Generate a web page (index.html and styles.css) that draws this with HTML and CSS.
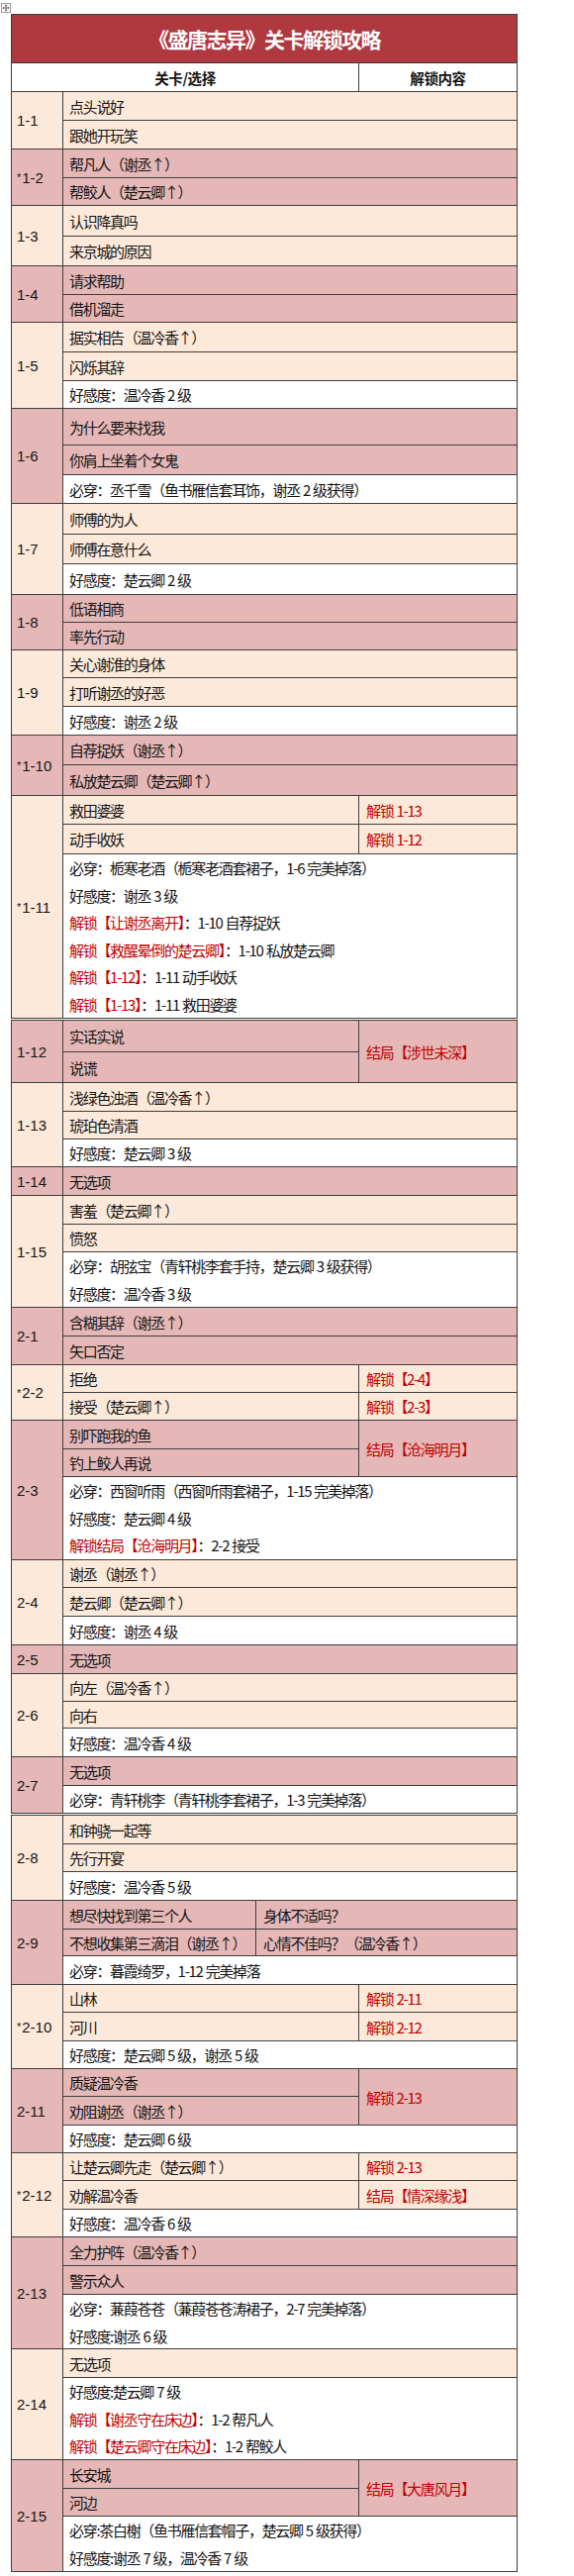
FILE: index.html
```html
<!DOCTYPE html>
<html lang="zh-CN">
<head>
<meta charset="utf-8">
<title>《盛唐志异》关卡解锁攻略</title>
<link rel="stylesheet" href="styles.css">
</head>
<body>
<div class="page">
  <div class="handle">
    <svg width="10" height="10" viewBox="0 0 10 10"><rect x="0.5" y="0.5" width="9" height="9" fill="#fff" stroke="#9a9a9a"/><path d="M5 2.5v5M2.5 5h5" stroke="#444" stroke-width="0.8"/><path d="M5 1.6l-1.3 1.4h2.6zM5 8.4l-1.3-1.4h2.6zM1.6 5l1.4-1.3v2.6zM8.4 5l-1.4-1.3v2.6z" fill="#444"/></svg>
  </div>

  <div class="table">
    <div class="title">《盛唐志异》关卡解锁攻略</div>
    <div class="head"><div class="hc">关卡/选择</div><div class="hc">解锁内容</div></div>

    <div class="group peach">
      <div class="num">1-1</div>
      <div class="body">
        <div class="c wide">点头说好</div>
        <div class="c wide">跟她开玩笑</div>
      </div>
    </div>

    <div class="group pink">
      <div class="num"><span class="star">*</span>1-2</div>
      <div class="body">
        <div class="c wide">帮凡人（谢丞↑）</div>
        <div class="c wide h27">帮鲛人（楚云卿↑）</div>
      </div>
    </div>

    <div class="group peach">
      <div class="num">1-3</div>
      <div class="body">
        <div class="c wide h30">认识降真吗</div>
        <div class="c wide h29">来京城的原因</div>
      </div>
    </div>

    <div class="group pink">
      <div class="num">1-4</div>
      <div class="body">
        <div class="c wide">请求帮助</div>
        <div class="c wide h27">借机溜走</div>
      </div>
    </div>

    <div class="group peach">
      <div class="num">1-5</div>
      <div class="body">
        <div class="c wide h29">据实相告（温冷香↑）</div>
        <div class="c wide">闪烁其辞</div>
        <div class="c wide info h27">好感度：温冷香 2 级</div>
      </div>
    </div>

    <div class="group pink">
      <div class="num">1-6</div>
      <div class="body">
        <div class="c wide h36">为什么要来找我</div>
        <div class="c wide h29">你肩上坐着个女鬼</div>
        <div class="c wide info">必穿：丞千雪（鱼书雁信套耳饰，谢丞 2 级获得）</div>
      </div>
    </div>

    <div class="group peach">
      <div class="num">1-7</div>
      <div class="body">
        <div class="c wide h30">师傅的为人</div>
        <div class="c wide h29">师傅在意什么</div>
        <div class="c wide info h30">好感度：楚云卿 2 级</div>
      </div>
    </div>

    <div class="group pink">
      <div class="num">1-8</div>
      <div class="body">
        <div class="c wide h27">低语相商</div>
        <div class="c wide h27">率先行动</div>
      </div>
    </div>

    <div class="group peach">
      <div class="num">1-9</div>
      <div class="body">
        <div class="c wide h27">关心谢淮的身体</div>
        <div class="c wide">打听谢丞的好恶</div>
        <div class="c wide info">好感度：谢丞 2 级</div>
      </div>
    </div>

    <div class="group pink">
      <div class="num"><span class="star">*</span>1-10</div>
      <div class="body">
        <div class="c wide h29">自荐捉妖（谢丞↑）</div>
        <div class="c wide h30">私放楚云卿（楚云卿↑）</div>
      </div>
    </div>

    <div class="group peach">
      <div class="num"><span class="star">*</span>1-11</div>
      <div class="body">
        <div class="c">救田婆婆</div>
        <div class="c u">解锁 1-13</div>
        <div class="c h29">动手收妖</div>
        <div class="c u h29">解锁 1-12</div>
        <div class="multi wide h165">
          <p>必穿：栀寒老酒（栀寒老酒套裙子，1-6 完美掉落）</p>
          <p>好感度：谢丞 3 级</p>
          <p><span class="red">解锁【让谢丞离开】</span>：1-10 自荐捉妖</p>
          <p><span class="red">解锁【救醒晕倒的楚云卿】</span>：1-10 私放楚云卿</p>
          <p><span class="red">解锁【1-12】</span>：1-11 动手收妖</p>
          <p><span class="red">解锁【1-13】</span>：1-11 救田婆婆</p>
        </div>
      </div>
    </div>
  </div>

  <div class="table">
    <div class="group pink">
      <div class="num">1-12</div>
      <div class="body">
        <div class="c h31">实话实说</div>
        <div class="c u tall">结局【涉世未深】</div>
        <div class="c h30">说谎</div>
      </div>
    </div>

    <div class="group peach">
      <div class="num">1-13</div>
      <div class="body">
        <div class="c wide">浅绿色浊酒（温冷香↑）</div>
        <div class="c wide h27">琥珀色清酒</div>
        <div class="c wide info h27">好感度：楚云卿 3 级</div>
      </div>
    </div>

    <div class="group pink">
      <div class="num">1-14</div>
      <div class="body">
        <div class="c wide">无选项</div>
      </div>
    </div>

    <div class="group peach">
      <div class="num">1-15</div>
      <div class="body">
        <div class="c wide">害羞（楚云卿↑）</div>
        <div class="c wide h27">愤怒</div>
        <div class="multi wide h55">
          <p>必穿：胡弦宝（青轩桃李套手持，楚云卿 3 级获得）</p>
          <p>好感度：温冷香 3 级</p>
        </div>
      </div>
    </div>

    <div class="group pink">
      <div class="num">2-1</div>
      <div class="body">
        <div class="c wide">含糊其辞（谢丞↑）</div>
        <div class="c wide">矢口否定</div>
      </div>
    </div>

    <div class="group peach">
      <div class="num"><span class="star">*</span>2-2</div>
      <div class="body">
        <div class="c h27">拒绝</div>
        <div class="c u h27">解锁【2-4】</div>
        <div class="c h27">接受（楚云卿↑）</div>
        <div class="c u h27">解锁【2-3】</div>
      </div>
    </div>

    <div class="group pink">
      <div class="num">2-3</div>
      <div class="body">
        <div class="c">别吓跑我的鱼</div>
        <div class="c u tall">结局【沧海明月】</div>
        <div class="c h27">钓上鲛人再说</div>
        <div class="multi wide h83">
          <p>必穿：西窗听雨（西窗听雨套裙子，1-15 完美掉落）</p>
          <p>好感度：楚云卿 4 级</p>
          <p><span class="red">解锁结局【沧海明月】</span>：2-2 接受</p>
        </div>
      </div>
    </div>

    <div class="group peach">
      <div class="num">2-4</div>
      <div class="body">
        <div class="c wide h27">谢丞（谢丞↑）</div>
        <div class="c wide">楚云卿（楚云卿↑）</div>
        <div class="c wide info">好感度：谢丞 4 级</div>
      </div>
    </div>

    <div class="group pink">
      <div class="num">2-5</div>
      <div class="body">
        <div class="c wide">无选项</div>
      </div>
    </div>

    <div class="group peach">
      <div class="num">2-6</div>
      <div class="body">
        <div class="c wide h27">向左（温冷香↑）</div>
        <div class="c wide h26">向右</div>
        <div class="c wide info">好感度：温冷香 4 级</div>
      </div>
    </div>

    <div class="group pink">
      <div class="num">2-7</div>
      <div class="body">
        <div class="c wide">无选项</div>
        <div class="c wide info h27">必穿：青轩桃李（青轩桃李套裙子，1-3 完美掉落）</div>
      </div>
    </div>
  </div>

  <div class="table">
    <div class="group peach">
      <div class="num">2-8</div>
      <div class="body">
        <div class="c wide">和钟骁一起等</div>
        <div class="c wide h27">先行开宴</div>
        <div class="c wide info">好感度：温冷香 5 级</div>
      </div>
    </div>

    <div class="group pink">
      <div class="num">2-9</div>
      <div class="body split">
        <div class="c">想尽快找到第三个人</div>
        <div class="c right">身体不适吗？</div>
        <div class="c h26">不想收集第三滴泪（谢丞↑）</div>
        <div class="c right h26">心情不佳吗？（温冷香↑）</div>
        <div class="c wide info">必穿：暮霞绮罗，1-12 完美掉落</div>
      </div>
    </div>

    <div class="group peach">
      <div class="num"><span class="star">*</span>2-10</div>
      <div class="body">
        <div class="c h27">山林</div>
        <div class="c u h27">解锁 2-11</div>
        <div class="c">河川</div>
        <div class="c u">解锁 2-12</div>
        <div class="c wide info h27">好感度：楚云卿 5 级，谢丞 5 级</div>
      </div>
    </div>

    <div class="group pink">
      <div class="num">2-11</div>
      <div class="body">
        <div class="c h27">质疑温冷香</div>
        <div class="c u tall">解锁 2-13</div>
        <div class="c">劝阻谢丞（谢丞↑）</div>
        <div class="c wide info h27">好感度：楚云卿 6 级</div>
      </div>
    </div>

    <div class="group peach">
      <div class="num"><span class="star">*</span>2-12</div>
      <div class="body">
        <div class="c h27">让楚云卿先走（楚云卿↑）</div>
        <div class="c u h27">解锁 2-13</div>
        <div class="c">劝解温冷香</div>
        <div class="c u">结局【情深缘浅】</div>
        <div class="c wide info h27">好感度：温冷香 6 级</div>
      </div>
    </div>

    <div class="group pink">
      <div class="num">2-13</div>
      <div class="body">
        <div class="c wide">全力护阵（温冷香↑）</div>
        <div class="c wide">警示众人</div>
        <div class="multi wide h54">
          <p>必穿：蒹葭苍苍（蒹葭苍苍涛裙子，2-7 完美掉落）</p>
          <p>好感度:谢丞 6 级</p>
        </div>
      </div>
    </div>

    <div class="group peach">
      <div class="num">2-14</div>
      <div class="body">
        <div class="c wide">无选项</div>
        <div class="multi wide h82">
          <p>好感度:楚云卿 7 级</p>
          <p><span class="red">解锁【谢丞守在床边】</span>：1-2 帮凡人</p>
          <p><span class="red">解锁【楚云卿守在床边】</span>：1-2 帮鲛人</p>
        </div>
      </div>
    </div>

    <div class="group pink">
      <div class="num">2-15</div>
      <div class="body">
        <div class="c">长安城</div>
        <div class="c u tall">结局【大唐风月】</div>
        <div class="c h27">河边</div>
        <div class="multi wide h55">
          <p>必穿:茶白榭（鱼书雁信套帽子，楚云卿 5 级获得）</p>
          <p>好感度:谢丞 7 级，温冷香 7 级</p>
        </div>
      </div>
    </div>
  </div>
</div>
</body>
</html>
```

FILE: styles.css
```css
html, body {
  margin: 0;
  padding: 0;
  background: #ffffff;
}

body {
  font-family: "Noto Sans CJK SC", "Liberation Sans", sans-serif;
  color: #141414;
}

.page {
  padding-top: 3px;
}

.handle {
  width: 10px;
  height: 10px;
  margin: 0 0 1px 1px;
}

.handle svg {
  display: block;
}

.table {
  width: 512px;
  box-sizing: border-box;
  margin-left: 11px;
  padding: 1px;
  background: #3e3e3e;
  display: flex;
  flex-direction: column;
  gap: 1px;
}

.table + .table {
  margin-top: 1px;
}

.title {
  height: 48px;
  background: #b0393f;
  color: #ffffff;
  font-size: 21px;
  font-weight: bold;
  letter-spacing: -1.5px;
  display: flex;
  align-items: center;
  justify-content: center;
}

.head {
  display: grid;
  grid-template-columns: 350px 159px;
  gap: 1px;
}

.hc {
  height: 28px;
  background: #ffffff;
  font-size: 14.5px;
  font-weight: bold;
  letter-spacing: -0.4px;
  display: flex;
  align-items: center;
  justify-content: center;
}

.group {
  display: flex;
  gap: 1px;
}

.num {
  width: 51px;
  flex: none;
  box-sizing: border-box;
  padding-left: 5px;
  font-family: "Liberation Sans", "Noto Sans CJK SC", sans-serif;
  font-size: 15px;
  display: flex;
  align-items: center;
}

.star {
  font-size: 11px;
  vertical-align: -4px;
  margin-right: 1px;
}

.body {
  flex: 1;
  display: grid;
  grid-template-columns: 298px 159px;
  gap: 1px;
}

.body.split {
  grid-template-columns: 194px 263px;
}

.c {
  height: 28px;
  box-sizing: border-box;
  padding-left: 6px;
  font-size: 15px;
  letter-spacing: -1.3px;
  word-spacing: 1px;
  white-space: nowrap;
  display: flex;
  align-items: center;
}

.wide {
  grid-column: 1 / -1;
}

.u {
  padding-left: 7px;
  color: #c00000;
}

.right {
  padding-left: 7px;
}

.tall {
  grid-row: span 2;
  height: auto;
}

.peach .num,
.peach .c {
  background: #fde9d9;
}

.pink .num,
.pink .c {
  background: #e5b8b7;
}

.group .info,
.multi {
  background: #ffffff;
}

.multi {
  box-sizing: border-box;
  padding-left: 6px;
  font-size: 15px;
  letter-spacing: -1.3px;
  word-spacing: 1px;
  white-space: nowrap;
}

.multi p {
  margin: 0;
  line-height: 27.5px;
}

.red {
  color: #c00000;
}

.h26 { height: 26px; }
.h27 { height: 27px; }
.h29 { height: 29px; }
.h30 { height: 30px; }
.h31 { height: 31px; }
.h36 { height: 36px; }
.h54 { height: 54px; }
.h55 { height: 55px; }
.h82 { height: 82px; }
.h83 { height: 83px; }
.h165 { height: 165px; }
```
